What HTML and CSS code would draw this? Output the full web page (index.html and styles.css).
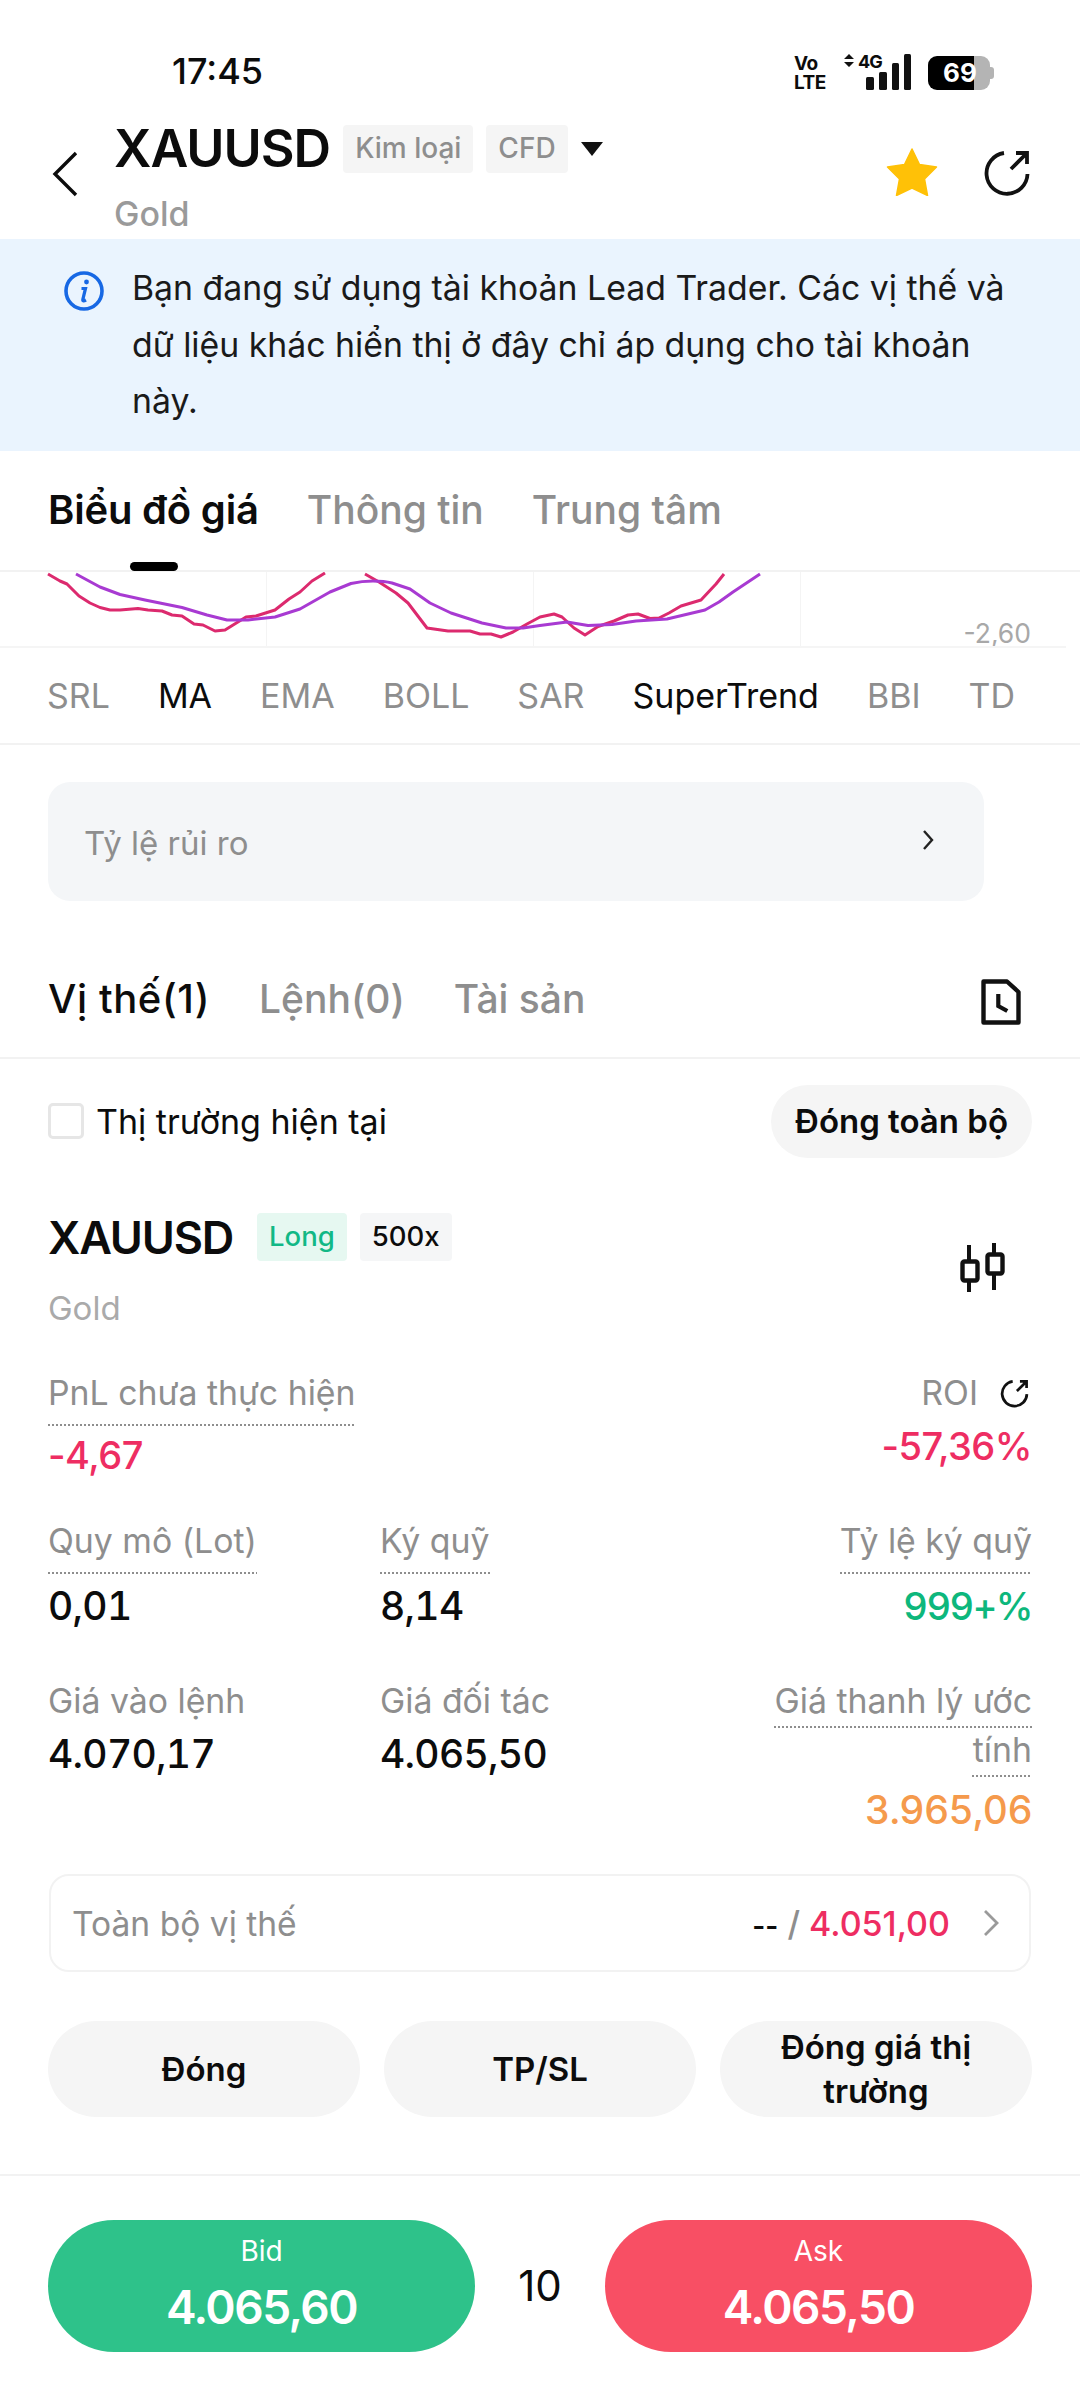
FILE: index.html
```html
<!DOCTYPE html>
<html>
<head>
    <meta charset="utf-8">
    <title>XAUUSD</title>
    <link rel="stylesheet" href="styles.css">
</head>
<body>

    <!-- Status bar -->
    <div class="status">
        <span class="clock">17:45</span>
        <div class="status-icons">
            <div class="volte"><span>Vo</span><span>LTE</span></div>
            <div class="net">
                <svg class="updown" viewBox="0 0 10 13"><path d="M5 0L10 5H0ZM0 8H10L5 13Z"/></svg>
                <span class="net-4g">4G</span>
            </div>
            <svg class="bars" viewBox="0 0 46 36"><rect x="1" y="23" width="8" height="13" rx="1.5"/><rect x="14" y="18" width="8" height="18" rx="1.5"/><rect x="27" y="9" width="7" height="27" rx="1.5"/><rect x="39" y="0" width="7" height="36" rx="1.5"/></svg>
            <div class="battery">69</div>
        </div>
    </div>

    <!-- Header -->
    <div class="header">
        <svg class="back" viewBox="0 0 26 46"><path d="M24 2L3 23L24 44" fill="none" stroke="#0c0c0c" stroke-width="3.4"/></svg>
        <div class="title-block">
            <div class="title-row">
                <span class="title">XAUUSD</span>
                <span class="tag">Kim loại</span>
                <span class="tag">CFD</span>
                <svg class="caret" viewBox="0 0 22 14"><path d="M0 0H22L11 14Z" fill="#111"/></svg>
            </div>
            <div class="title-sub">Gold</div>
        </div>
        <svg class="star" viewBox="0 0 52 48"><path d="M26 1L33.5 16.5L50.5 19L38.5 31L41.5 47.5L26 40L10.5 47.5L13.5 31L1.5 19L18.5 16.5Z" fill="#ffc107" stroke="#ffc107" stroke-width="1.5" stroke-linejoin="round"/></svg>
        <svg class="share" viewBox="0 0 48 48"><path d="M21 4A20.5 20.5 0 1 0 44.5 25M28 20L43 5M33 4H44V15" fill="none" stroke="#111" stroke-width="3.8"/></svg>
    </div>

    <!-- Notice -->
    <div class="notice">
        <svg class="info" viewBox="0 0 40 40"><circle cx="20" cy="20" r="18" fill="none" stroke="#1768e4" stroke-width="3.6"/><circle cx="22.5" cy="11" r="2.4" fill="#1768e4"/><path d="M17.5 17.5H21.5L18.8 28.5Q18.5 31 22 29" fill="none" stroke="#1768e4" stroke-width="3.2"/></svg>
        <p class="notice-text">Bạn đang sử dụng tài khoản Lead Trader. Các vị thế và dữ liệu khác hiển thị ở đây chỉ áp dụng cho tài khoản này.</p>
    </div>

    <!-- Main tabs -->
    <div class="tabs">
        <span class="tab tab-on">Biểu đồ giá</span>
        <span class="tab">Thông tin</span>
        <span class="tab">Trung tâm</span>
    </div>

    <!-- Indicator pane of the chart -->
    <div class="chart">
        <div class="grid-col"></div>
        <div class="grid-col"></div>
        <div class="grid-col"></div>
        <div class="grid-col"></div>
        <svg class="chart-lines" viewBox="0 572 1080 76">
            <path class="line-red" d="M48 574L60 581L67 584L79 596L90 603L100 607.5L110 610L120 610L138 608.5L148 610L162 611L172 615L182 616L194 624L203 625L215 631L225 630L246 617L256 616L275 610L289 599L300 592L312 581L325 573"/>
            <path class="line-red" d="M365 574L379 582L396 593L408 603L427 628L448 631L470 631L480 634L491 634L501 637L513 632L527 624L540 617L554 614L562 617L574 628L585 635L598 626.5L614 621L628 615L638 614L650 618.5L659 618L669 613L681 606L701 600L716 584L724 574"/>
            <path class="line-purple" d="M76 574L100 587L120 594.5L145 600L182 607.5L207 615L227 620L248 620L275 617L300 609L330 592L351 583.5Q362 581 373 581Q384 581 392 583L410 589L430 603L451 613L482 623L506 628L523 628L540 625.5L567 622L588 625.5L612 624.5L636 621L667 619L705 610L719 602L733 592L760 574"/>
        </svg>
        <span class="axis-label">-2,60</span>
    </div>

    <div class="indicators">
        <span>SRL</span>
        <span class="ind-on">MA</span>
        <span>EMA</span>
        <span>BOLL</span>
        <span>SAR</span>
        <span class="ind-on">SuperTrend</span>
        <span>BBI</span>
        <span>TD</span>
    </div>

    <!-- Risk row -->
    <div class="risk-wrap">
        <div class="risk">
            <span>Tỷ lệ rủi ro</span>
            <svg class="risk-arrow" viewBox="0 0 12 20"><path d="M2 1L10 10L2 19" fill="none" stroke="#222" stroke-width="2.4"/></svg>
        </div>
    </div>

    <!-- Position tabs -->
    <div class="pos-tabs">
        <span class="pos-tab pos-tab-on">Vị thế(1)</span>
        <span class="pos-tab">Lệnh(0)</span>
        <span class="pos-tab">Tài sản</span>
        <svg class="doc" viewBox="0 0 40 46"><path d="M2.5 2.5H26L37.5 13V43.5H2.5Z" fill="none" stroke="#111" stroke-width="4.4" stroke-linejoin="round"/><path d="M17.3 15V27L26.3 32" fill="none" stroke="#111" stroke-width="4.2"/></svg>
    </div>

    <div class="filter">
        <label class="check"><span class="box"></span>Thị trường hiện tại</label>
        <span class="close-all">Đóng toàn bộ</span>
    </div>

    <!-- Position card -->
    <div class="card">
        <div class="card-head">
            <div>
                <div class="card-title">
                    <span class="symbol">XAUUSD</span>
                    <span class="badge badge-long">Long</span>
                    <span class="badge">500x</span>
                </div>
                <div class="card-sub">Gold</div>
            </div>
            <svg class="candle" viewBox="0 0 48 50"><path d="M11 2V49M36 0V47" stroke="#111" stroke-width="4"/><rect x="4.5" y="18.5" width="15" height="19" fill="#fff" stroke="#111" stroke-width="4.4" rx="2"/><rect x="29.5" y="11.5" width="15" height="19" fill="#fff" stroke="#111" stroke-width="4.4" rx="2"/></svg>
        </div>

        <div class="pnl-row">
            <div>
                <span class="lbl dotted">PnL chưa thực hiện</span>
                <div class="val red pnl-val">-4,67</div>
            </div>
            <div class="right">
                <div class="roi-lbl">
                    <span class="lbl">ROI</span>
                    <svg class="roi-icon" viewBox="0 0 48 48"><path d="M21 4A20.5 20.5 0 1 0 44.5 25M28 20L43 5M33 4H44V15" fill="none" stroke="#111" stroke-width="4.5"/></svg>
                </div>
                <div class="val red">-57,36%</div>
            </div>
        </div>

        <div class="stat-row stat-row-1">
            <div class="stat-a"><span class="lbl dotted">Quy mô (Lot)</span><div class="val">0,01</div></div>
            <div class="stat-b"><span class="lbl dotted">Ký quỹ</span><div class="val">8,14</div></div>
            <div class="stat-c right"><span class="lbl dotted">Tỷ lệ ký quỹ</span><div class="val green">999+%</div></div>
        </div>

        <div class="stat-row stat-row-2">
            <div class="stat-a"><span class="lbl">Giá vào lệnh</span><div class="val">4.070,17</div></div>
            <div class="stat-b"><span class="lbl">Giá đối tác</span><div class="val">4.065,50</div></div>
            <div class="stat-c right"><span class="lbl wrap">Giá thanh lý ước tính</span><div class="val orange">3.965,06</div></div>
        </div>

        <div class="all-pos">
            <span class="all-lbl">Toàn bộ vị thế</span>
            <span class="all-val"><b>--</b> <i>/</i> <em>4.051,00</em></span>
            <svg class="all-arrow" viewBox="0 0 16 26"><path d="M2 1L14 13L2 25" fill="none" stroke="#9a9a9a" stroke-width="2.8"/></svg>
        </div>

        <div class="actions">
            <span class="act">Đóng</span>
            <span class="act">TP/SL</span>
            <span class="act">Đóng giá thị trường</span>
        </div>
    </div>

    <!-- Trade bar -->
    <div class="trade">
        <div class="side bid"><span class="side-lbl">Bid</span><span class="side-val">4.065,60</span></div>
        <div class="qty">10</div>
        <div class="side ask"><span class="side-lbl">Ask</span><span class="side-val">4.065,50</span></div>
    </div>

</body>
</html>
```

FILE: styles.css
```css
* {
    box-sizing: border-box;
}

body {
    margin: 0;
    width: 1080px;
    height: 2400px;
    background-color: white;
    font-family: "Inter", "Roboto", sans-serif;
    font-size: 34px;
    color: #0c0c0c;
    overflow: hidden;
}

/* status bar */
.status {
    height: 110px;
    padding: 53px 90px 0 172px;
    display: flex;
    justify-content: space-between;
    align-items: flex-start;
}

.clock {
    font-size: 36px;
    line-height: 36px;
    font-weight: 500;
}

.status-icons {
    display: flex;
    margin-top: 1px;
}

.volte {
    width: 36px;
    display: flex;
    flex-direction: column;
    font-size: 19px;
    line-height: 19px;
    font-weight: 700;
    letter-spacing: -0.5px;
}

.net {
    display: flex;
    align-items: flex-start;
    margin-left: 14px;
    width: 41px;
}

.updown {
    width: 10px;
    height: 13px;
    fill: #111;
}

.net-4g {
    font-size: 18px;
    line-height: 16px;
    font-weight: 700;
    letter-spacing: -1px;
    margin-left: 4px;
}

.bars {
    width: 46px;
    height: 36px;
    fill: #111;
    margin-left: -20px;
}

.battery {
    position: relative;
    width: 62px;
    height: 34px;
    margin: 2px 0 0 17px;
    padding-left: 15px;
    border-radius: 9px;
    background: linear-gradient(to right, #000 46px, #b4b4b4 46px);
    color: white;
    font-size: 26px;
    line-height: 34px;
    font-weight: 700;
}

.battery::after {
    content: "";
    position: absolute;
    right: -4px;
    top: 11px;
    width: 4px;
    height: 12px;
    border-radius: 0 3px 3px 0;
    background-color: #b4b4b4;
}

/* header */
.header {
    height: 129px;
    display: flex;
    align-items: flex-start;
    padding-left: 52px;
}

.back {
    width: 26px;
    height: 46px;
    margin-top: 41px;
}

.title-block {
    margin-left: 36px;
    width: 772px;
}

.title-row {
    display: flex;
    align-items: flex-start;
    height: 86px;
    padding-top: 15px;
}

.title {
    font-size: 52px;
    line-height: 48px;
    font-weight: 600;
    letter-spacing: -1px;
}

.tag {
    height: 48px;
    padding: 0 12px;
    margin-left: 13px;
    background-color: #f5f5f5;
    border-radius: 4px;
    color: #8e8e8e;
    font-size: 28px;
    line-height: 46px;
    font-weight: 500;
}

.caret {
    width: 22px;
    height: 14px;
    margin: 17px 0 0 13px;
}

.title-sub {
    font-size: 34px;
    line-height: 36px;
    font-weight: 500;
    color: #9a9a9a;
}

.star {
    width: 52px;
    height: 48px;
    margin-top: 38px;
}

.share {
    width: 48px;
    height: 48px;
    margin: 39px 0 0 45px;
}

/* notice */
.notice {
    height: 212px;
    display: flex;
    padding: 21px 66px 0 64px;
    background-color: #eaf4fe;
}

.info {
    flex: none;
    width: 40px;
    height: 40px;
    margin-top: 11px;
}

.notice-text {
    margin: 0 0 0 28px;
    font-size: 33.8px;
    line-height: 56.5px;
    color: #1a1a1a;
}

/* main tabs */
.tabs {
    height: 121px;
    display: flex;
    gap: 48px;
    padding: 29px 0 0 48px;
    border-bottom: 2px solid #f2f2f2;
}

.tab {
    position: relative;
    height: 60px;
    font-size: 39px;
    line-height: 60px;
    font-weight: 500;
    color: #8e8e8e;
}

.tab-on {
    color: #0c0c0c;
    font-size: 40px;
    font-weight: 600;
    letter-spacing: -0.2px;
}

.tab-on::after {
    content: "";
    position: absolute;
    left: 82px;
    bottom: -31px;
    width: 48px;
    height: 9px;
    border-radius: 5px;
    background-color: black;
}

/* chart */
.chart {
    position: relative;
    height: 76px;
    display: grid;
    grid-template-columns: repeat(4, 267px);
    border-bottom: 2px solid #f5f5f5;
    margin-right: 14px;
    overflow: hidden;
}

.grid-col {
    border-right: 1px solid #f4f4f4;
}

.chart-lines {
    position: absolute;
    left: 0;
    top: 0;
    width: 1080px;
    height: 76px;
}

.line-red,
.line-purple {
    fill: none;
    stroke-width: 3px;
    stroke-linejoin: round;
}

.line-red {
    stroke: #dc2a6e;
}

.line-purple {
    stroke: #a83ad2;
}

.axis-label {
    position: absolute;
    right: 35px;
    bottom: -1px;
    font-size: 26.5px;
    line-height: 27px;
    color: #a8a8a8;
}

/* indicator names */
.indicators {
    height: 97px;
    display: flex;
    align-items: center;
    justify-content: space-between;
    padding: 0 65px 0 47px;
    border-bottom: 2px solid #f2f2f2;
    font-size: 34px;
    color: #8e8e8e;
}

.ind-on {
    color: #0c0c0c;
}

/* risk row */
.risk-wrap {
    height: 156px;
    padding: 37px 96px 0 48px;
}

.risk {
    height: 119px;
    display: flex;
    align-items: center;
    justify-content: space-between;
    padding: 3px 50px 0 36px;
    border-radius: 22px;
    background-color: #f4f6f8;
    color: #8e8e8e;
    font-size: 33px;
}

.risk-arrow {
    width: 12px;
    height: 20px;
    margin-bottom: 6px;
}

/* position tabs */
.pos-tabs {
    height: 158px;
    display: flex;
    gap: 49px;
    padding: 73px 59px 0 48px;
    border-bottom: 2px solid #f2f2f2;
}

.pos-tab {
    font-size: 39px;
    line-height: 50px;
    font-weight: 500;
    color: #8e8e8e;
}

.pos-tab-on {
    color: #0c0c0c;
    font-size: 40px;
    letter-spacing: 0.6px;
}

.doc {
    width: 40px;
    height: 46px;
    margin: 5px 0 0 auto;
}

.filter {
    height: 98px;
    display: flex;
    align-items: center;
    justify-content: space-between;
    padding: 26px 48px 0 48px;
}

.check {
    display: flex;
    align-items: center;
    gap: 12px;
    font-size: 34px;
}

.box {
    width: 36px;
    height: 36px;
    border: 3px solid #e6e6e6;
    border-radius: 5px;
}

.close-all {
    height: 73px;
    padding: 0 24px;
    border-radius: 37px;
    background-color: #f5f5f5;
    font-size: 33px;
    line-height: 72px;
    font-weight: 600;
}

/* position card */
.card {
    padding: 0 48px;
}

.card-head {
    display: flex;
    justify-content: space-between;
    padding-top: 56px;
    height: 215px;
}

.card-title {
    display: flex;
    align-items: center;
    height: 48px;
}

.symbol {
    font-size: 45px;
    font-weight: 600;
    letter-spacing: -1.2px;
    margin-right: 24px;
}

.badge {
    height: 48px;
    padding: 0 12px;
    margin-right: 13px;
    border-radius: 4px;
    background-color: #f5f6f7;
    font-size: 27.5px;
    line-height: 46px;
    font-weight: 500;
}

.badge-long {
    background-color: #e6f8f1;
    color: #12b886;
}

.card-sub {
    margin-top: 27px;
    font-size: 33px;
    line-height: 40px;
    color: #aaaaaa;
}

.candle {
    width: 48px;
    height: 50px;
    margin: 30px 26px 0 0;
}

.lbl {
    display: inline-block;
    font-size: 33.8px;
    line-height: 42px;
    color: #8e8e8e;
}

.dotted {
    background-image: linear-gradient(to right, #8e8e8e 50%, transparent 50%);
    background-size: 4px 2px;
    background-repeat: repeat-x;
    background-position: 0 100%;
    padding-bottom: 12px;
}

.wrap {
    width: 268px;
    margin-top: -4px;
    text-align: right;
    line-height: 49px;
    text-decoration: underline dotted #8e8e8e 2px;
    text-underline-offset: 13px;
}

.val {
    margin-top: 8px;
    font-size: 39px;
    line-height: 48px;
    font-weight: 500;
    letter-spacing: -0.7px;
    font-variant-numeric: tabular-nums;
}

.red {
    color: #ee2d62;
    font-size: 38px;
    letter-spacing: -0.5px;
    font-variant-numeric: normal;
}

.green {
    color: #0db77c;
    font-size: 38px;
    letter-spacing: -1.5px;
}

.orange {
    margin-top: 12px;
    color: #f59a4c;
}

.right {
    text-align: right;
}

.pnl-row {
    display: flex;
    justify-content: space-between;
    height: 148px;
}

.pnl-val {
    margin-top: 5px;
}

.roi-lbl {
    display: flex;
    justify-content: flex-end;
    align-items: center;
    gap: 22px;
}

.roi-icon {
    width: 29px;
    height: 29px;
    margin-right: 3px;
}

.stat-row {
    display: flex;
}

.stat-row-1 {
    height: 160px;
}

.stat-row-2 {
    height: 194px;
}

.stat-a {
    width: 332px;
}

.stat-b {
    flex: 1;
}

.all-pos {
    height: 98px;
    display: flex;
    align-items: center;
    padding: 0 30px 0 21px;
    margin: 0 1px;
    border: 2px solid #f2f2f2;
    border-radius: 20px;
}

.all-lbl {
    font-size: 33.6px;
    color: #8e8e8e;
}

.all-val {
    margin-left: auto;
    font-size: 34px;
    font-weight: 500;
}

.all-val b {
    font-size: 28px;
    font-weight: 600;
}

.all-val i {
    font-style: normal;
    color: #8e8e8e;
}

.all-val em {
    font-style: normal;
    color: #ee2d62;
}

.all-arrow {
    width: 16px;
    height: 26px;
    margin-left: 33px;
}

.actions {
    display: grid;
    grid-template-columns: repeat(3, 312px);
    gap: 24px;
    margin-top: 49px;
}

.act {
    height: 96px;
    display: flex;
    align-items: center;
    justify-content: center;
    text-align: center;
    padding: 0 50px;
    border-radius: 48px;
    background-color: #f5f5f5;
    font-size: 33px;
    line-height: 44px;
    font-weight: 600;
}

/* trade bar */
.trade {
    margin-top: 57px;
    height: 180px;
    display: flex;
    justify-content: space-between;
    padding: 44px 48px 0;
    border-top: 2px solid #f2f2f2;
}

.side {
    width: 427px;
    height: 132px;
    display: flex;
    flex-direction: column;
    align-items: center;
    padding-top: 14px;
    border-radius: 66px;
    color: white;
}

.bid {
    background-color: #2ec28a;
}

.ask {
    background-color: #f84f64;
}

.side-lbl {
    font-size: 28px;
    line-height: 34px;
}

.side-val {
    margin-top: 12px;
    font-size: 46px;
    line-height: 54px;
    font-weight: 600;
    letter-spacing: -1.5px;
}

.qty {
    font-size: 42px;
    line-height: 132px;
}
```
